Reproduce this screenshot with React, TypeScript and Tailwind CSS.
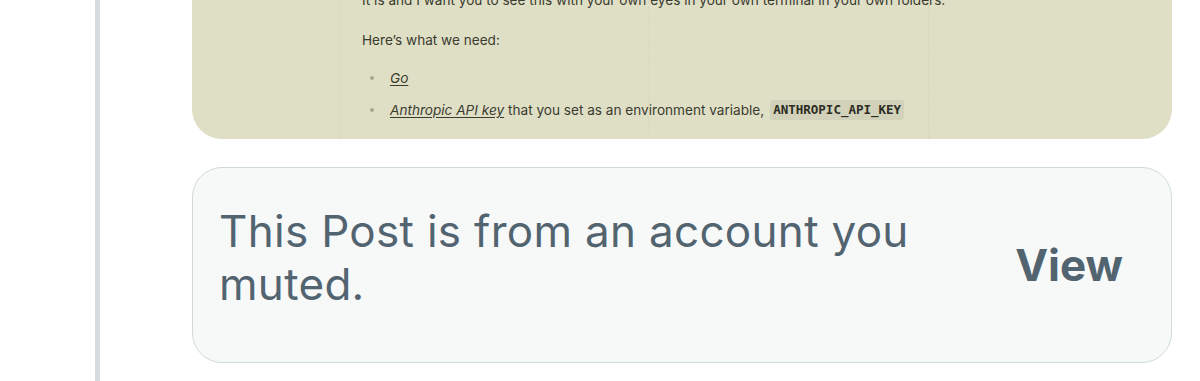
import React from "react";

export default function App() {
  return (
    <div className="w-[1200px] h-[381px] overflow-hidden bg-white flex" style={{ fontFamily: "Inter, 'Noto Sans', sans-serif" }}>
      <div className="w-[95px] shrink-0" />
      <div className="w-[5px] shrink-0 bg-[#d5dbe1]" />
      <div className="w-[92px] shrink-0" />
      <div className="w-[980px] shrink-0 flex flex-col">
        {/* Top card */}
        <div className="relative mt-[-50px] rounded-b-[30px] bg-[#dfdfc6] pl-[170px] pt-[40px] pb-[19px] text-[13.6px] leading-[20px] text-[#3b3b30] overflow-hidden">
          <div className="absolute top-0 bottom-0 left-[148px] border-l border-dashed border-[#d6d6bd]" />
          <div className="absolute top-0 bottom-0 left-[456px] border-l border-dashed border-[#d9d9c0]" />
          <div className="absolute top-0 bottom-0 left-[736px] border-l border-dashed border-[#d6d6bd]" />
          <p className="relative whitespace-nowrap">It is and I want you to see this with your own eyes in your own terminal in your own folders.</p>
          <p className="relative mt-[20px]">Here’s what we need:</p>
          <ul className="relative mt-[18px] flex flex-col gap-[12px]">
            <li className="flex items-center">
              <span className="ml-[8px] mr-[16px] w-[4px] h-[4px] rounded-full bg-[#a9a98f]" />
              <span className="italic underline underline-offset-2">Go</span>
            </li>
            <li className="flex items-center">
              <span className="ml-[8px] mr-[16px] w-[4px] h-[4px] rounded-full bg-[#a9a98f]" />
              <span className="italic underline underline-offset-2">Anthropic API key</span>
              <span className="ml-[4px]">that you set as an environment variable,</span>
              <span className="ml-[6px] px-[3px] rounded-[3px] bg-[#d1d2b9] font-semibold text-[12.5px] leading-[20px] text-[#2c2c24]" style={{ fontFamily: "'DejaVu Sans Mono', monospace" }}>ANTHROPIC_API_KEY</span>
            </li>
          </ul>
        </div>
        {/* Bottom card */}
        <div className="mt-[28px] h-[196px] rounded-[30px] border border-[#cfd9de] bg-[#f7f9f9] flex pl-[26px] pr-[48px]">
          <div className="mt-[37px] w-[770px] text-[44px] leading-[53px] tracking-[0.3px] text-[#536471]">
            This Post is from an account you muted.
          </div>
          <div className="ml-auto self-center text-[44px] leading-[53px] font-bold text-[#536471]">View</div>
        </div>
      </div>
    </div>
  );
}
